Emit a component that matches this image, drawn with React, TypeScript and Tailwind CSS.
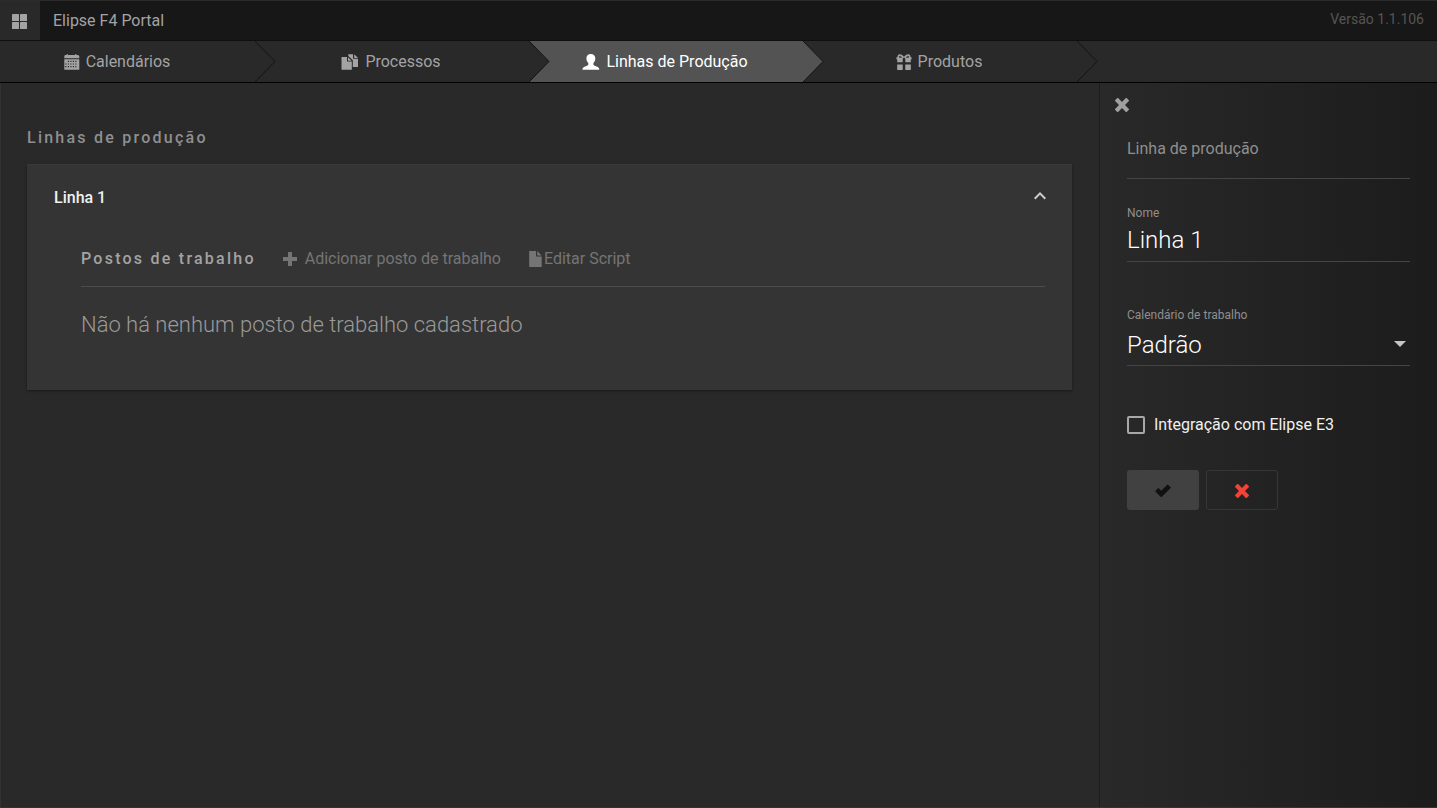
import { ReactNode, useState } from "react";
import clsx from "clsx";

type IconProps = { className?: string };

function Glyph({ className, children }: { className?: string; children: ReactNode }) {
  return (
    <svg
      viewBox="0 0 16 16"
      fill="currentColor"
      aria-hidden="true"
      className={clsx("size-4 shrink-0", className)}
    >
      {children}
    </svg>
  );
}

const GridIcon = ({ className }: IconProps) => (
  <Glyph className={className}>
    <rect x="0" y="1" width="7" height="7" rx="0.6" />
    <rect x="8" y="1" width="7" height="7" rx="0.6" />
    <rect x="0" y="9" width="7" height="7" rx="0.6" />
    <rect x="8" y="9" width="7" height="7" rx="0.6" />
  </Glyph>
);

const CalendarIcon = ({ className }: IconProps) => (
  <Glyph className={className}>
    <path d="M1.200 1H2.600V.300H4V1H11V.300h1.400V1h1.400Q15.300 1.200 15.300 2.600V4.300H.300V2.600Q.300 1 1.200 1Z" />
    <path
      fillRule="evenodd"
      d="M.300 5.200H15.300V15.700H.300ZM3.800 6.800v1.200h1.200V6.800ZM6.300 6.800v1.200h1.200V6.800ZM8.800 6.800v1.200h1.200V6.800ZM11.300 6.800v1.200h1.200V6.800ZM1.300 9.400v1.200h1.200V9.400ZM3.800 9.400v1.200h1.200V9.400ZM6.300 9.400v1.200h1.200V9.400ZM8.800 9.400v1.200h1.200V9.400ZM11.300 9.400v1.200h1.200V9.400ZM1.300 12v1.200h1.200V12ZM3.800 12v1.200h1.200V12ZM6.300 12v1.200h1.200V12ZM8.800 12v1.200h1.200V12ZM11.300 12v1.200h1.200V12Z"
    />
  </Glyph>
);

const DuplicateIcon = ({ className }: IconProps) => (
  <svg
    viewBox="0 0 18 16"
    fill="currentColor"
    aria-hidden="true"
    className={clsx("h-4 w-[18px] shrink-0", className)}
  >
    <path d="M.5 3H6V7.500H10.800V15.800H.500Z" />
    <path d="M7 3.200 10.600 6.700H7Z" />
    <path d="M7.300.300H12V4.800H17V13H11.800V6.300L7.300 1.900Z" />
    <path d="M13.200.300 17 4H13.200Z" />
  </svg>
);

const UserIcon = ({ className }: IconProps) => (
  <svg
    viewBox="0 0 18 16"
    fill="currentColor"
    aria-hidden="true"
    className={clsx("h-4 w-[18px] shrink-0", className)}
  >
    <path d="M8.800 0C11.600 0 13.300 1.700 13.300 4.200 13.300 6.200 12.600 7.800 11.400 9V10.400C11.400 10.900 11.700 11.200 12.200 11.400L15.700 12.900C16.700 13.400 17.200 14.100 17.200 15.200V15.800H.500V15.200C.500 14.100 1 13.400 2 12.900L5.500 11.400C6 11.200 6.300 10.900 6.300 10.400V9C5.100 7.800 4.400 6.200 4.400 4.200 4.400 1.700 6 0 8.800 0Z" />
  </svg>
);

const GiftIcon = ({ className }: IconProps) => (
  <Glyph className={className}>
    <path
      fillRule="evenodd"
      d="M3.600.200C5.200.200 6.500 1 7.500 2.500H8.500C9.500 1 10.800.200 12.400.200 13.800.200 14.500 1.400 14.500 3.200H15.600V5.200H14.800V8.200H9.300V4.600L8 3.500 6.700 4.600V8.200H1.200V5.200H.400V3.200H1.500C1.500 1.400 2.200.200 3.600.200ZM3.500 1.800 2.900 3.400 5.500 3.700 6.200 3.300ZM12.500 1.800 9.800 3.300 10.500 3.700 13.100 3.400Z"
    />
    <path d="M1.200 10.600H6.700V15.900H1.200ZM9.300 10.600H14.800V15.900H9.300Z" />
  </Glyph>
);

const PlusIcon = ({ className }: IconProps) => (
  <Glyph className={className}>
    <path d="M6 1H10V6H15V10H10V15H6V10H1V6H6Z" />
  </Glyph>
);

const FileIcon = ({ className }: IconProps) => (
  <Glyph className={className}>
    <path d="M1.200 0H8V5.600H13.700V16H1.200Z" />
    <path d="M9.200 0 13.700 4.500H9.200Z" />
  </Glyph>
);

const RemoveIcon = ({ className }: IconProps) => (
  <Glyph className={className}>
    <path d="M4.100 1.100 8 5 11.900 1.100Q12.300.800 12.700 1.100L14.900 3.300Q15.200 3.700 14.900 4.100L11 8 14.900 11.900Q15.200 12.300 14.900 12.700L12.700 14.900Q12.300 15.200 11.900 14.900L8 11 4.100 14.900Q3.700 15.200 3.300 14.900L1.100 12.700Q.800 12.300 1.100 11.900L5 8 1.100 4.100Q.800 3.700 1.100 3.300L3.300 1.100Q3.700.800 4.100 1.100Z" />
  </Glyph>
);

const OkIcon = ({ className }: IconProps) => (
  <Glyph className={className}>
    <path d="M13 1.700 15.700 4.300Q16 4.600 15.700 5L6.600 14.100Q6.200 14.400 5.900 14.100L.400 8.600Q.100 8.200.400 7.900L3 5.200Q3.400 4.900 3.700 5.200L6.200 7.700 12.300 1.700Q12.700 1.400 13 1.700Z" />
  </Glyph>
);

const tabs = [
  { name: "Calendários", icon: CalendarIcon },
  { name: "Processos", icon: DuplicateIcon },
  { name: "Linhas de Produção", icon: UserIcon },
  { name: "Produtos", icon: GiftIcon },
];

function Tabs() {
  const [current, setCurrent] = useState("Linhas de Produção");

  return (
    <nav className="flex h-[42px] border-b border-[#000000] bg-[#292929]">
      {tabs.map(({ name, icon: Icon }) => {
        const active = name === current;
        return (
          <button
            key={name}
            type="button"
            onClick={() => setCurrent(name)}
            className={clsx(
              "relative flex w-[274px] items-center justify-center gap-[6px] pt-px pr-[2px] text-base first:w-[255px] first:pr-[21px]",
              active ? "bg-[#535353] text-white" : "bg-[#292929] text-[#a3a3a3]"
            )}
          >
            <Icon />
            {name}
            <svg
              viewBox="0 0 21 41"
              aria-hidden="true"
              className={clsx(
                "absolute top-0 left-full z-10 h-[41px] w-[21px]",
                active ? "text-[#535353]" : "text-[#292929]"
              )}
            >
              <path d="M0 0 20 20.500 0 41Z" fill="currentColor" />
              <path d="M0 0 20 20.500 0 41" fill="none" stroke="#141414" />
            </svg>
          </button>
        );
      })}
    </nav>
  );
}

function LineCard() {
  const [open, setOpen] = useState(true);

  return (
    <section className="mt-[14px] border-t border-[#393939] bg-[#343434] px-[27px] shadow-[0_1px_2px_#181818]">
      <button
        type="button"
        onClick={() => setOpen(!open)}
        className="flex w-full items-center justify-between pt-[21px] text-base font-medium text-[#f0f0f0]"
      >
        Linha 1
        <svg
          viewBox="0 0 24 24"
          fill="currentColor"
          aria-hidden="true"
          className={clsx("-mt-1 mr-[-7px] size-6 text-[#cfcfcf]", !open && "rotate-180")}
        >
          <path d="M12 8 6 14l1.410 1.410L12 10.830l4.590 4.580L18 14z" />
        </svg>
      </button>
      {open && (
        <div className="mt-[37px] ml-[27px] pb-[49px]">
          <div className="flex items-center border-b border-[#4d4d4d] pb-[15px]">
            <h3 className="text-base font-medium tracking-[0.14em] text-[#a3a3a3]">
              Postos de trabalho
            </h3>
            <button type="button" className="ml-[26px] flex items-center gap-[7px] text-base text-[#757575]">
              <PlusIcon />
              Adicionar posto de trabalho
            </button>
            <button type="button" className="ml-[27px] flex items-center text-base text-[#757575]">
              <FileIcon />
              Editar Script
            </button>
          </div>
          <p className="mt-[22px] text-[22px] leading-8 font-light text-[#9a9a9a]">
            Não há nenhum posto de trabalho cadastrado
          </p>
        </div>
      )}
    </section>
  );
}

function LineForm() {
  return (
    <aside className="w-[338px] shrink-0 border-l border-[#1c1c1c] bg-linear-to-r from-[#292929] to-[#1c1c1c]">
      <button type="button" aria-label="Fechar" className="mt-[14px] ml-[14px] block text-[#a0a0a0]">
        <RemoveIcon />
      </button>
      <form className="px-[27px] pt-6" onSubmit={(e) => e.preventDefault()}>
        <h2 className="border-b border-[#454545] pb-[17px] text-base text-[#8f8f8f]">
          Linha de produção
        </h2>

        <label htmlFor="nome" className="mt-[26px] block text-xs text-[#8f8f8f]">
          Nome
        </label>
        <input
          id="nome"
          type="text"
          defaultValue="Linha 1"
          className="block h-[41px] w-full border-b border-[#454545] bg-transparent pb-[2px] text-2xl font-light text-white outline-none"
        />

        <label htmlFor="calendario" className="mt-[45px] block text-xs text-[#8f8f8f]">
          Calendário de trabalho
        </label>
        <div className="relative">
          <select
            id="calendario"
            className="block h-[43px] w-full appearance-none border-b border-[#454545] bg-transparent pt-[2px] text-2xl font-light text-white outline-none"
          >
            <option>Padrão</option>
          </select>
          <svg
            viewBox="0 0 12 6"
            fill="currentColor"
            aria-hidden="true"
            className="pointer-events-none absolute top-[18px] right-1 h-[6px] w-3 text-[#c4c4c4]"
          >
            <path d="M0 0h12L6 6z" />
          </svg>
        </div>

        <label className="mt-[47px] flex items-center gap-[9px] text-base text-[#f0f0f0]">
          <input
            type="checkbox"
            className="size-[18px] appearance-none rounded-xs border-2 border-[#a8a8a8] checked:bg-[#a8a8a8]"
          />
          Integração com Elipse E3
        </label>

        <div className="mt-[33px] flex gap-[7px]">
          <button
            type="submit"
            aria-label="Confirmar"
            className="flex h-10 w-18 items-center justify-center rounded-[3px] bg-[#414141] pt-[2px] text-[#111111]"
          >
            <OkIcon />
          </button>
          <button
            type="button"
            aria-label="Cancelar"
            className="flex h-10 w-18 items-center justify-center rounded-[3px] border border-[#363636] pt-[2px] text-[#f44336]"
          >
            <RemoveIcon />
          </button>
        </div>
      </form>
    </aside>
  );
}

export default function App() {
  return (
    <div className="flex min-h-screen flex-col border-b border-[#323232] bg-[#292929] font-[Roboto,sans-serif]">
      <header className="flex h-[41px] items-stretch border-t border-b border-t-[#2b2b2b] border-b-[#0f0f0f] bg-[#171717]">
        <button
          type="button"
          aria-label="Menu"
          className="flex w-10 items-center justify-center bg-[#292929] text-[#a3a3a3]"
        >
          <GridIcon />
        </button>
        <h1 className="ml-[13px] self-center text-base text-[#a3a3a3]">Elipse F4 Portal</h1>
        <span className="mr-[13px] ml-auto self-center pb-1 text-sm text-[#555555]">Versão 1.1.106</span>
      </header>
      <Tabs />
      <div className="flex grow">
        <main className="min-w-0 grow border-l border-[#323232] pt-[43px] pr-[27px] pl-[26px]">
          <h2 className="text-base font-medium tracking-[0.14em] text-[#8f8f8f]">Linhas de produção</h2>
          <LineCard />
        </main>
        <LineForm />
      </div>
    </div>
  );
}
